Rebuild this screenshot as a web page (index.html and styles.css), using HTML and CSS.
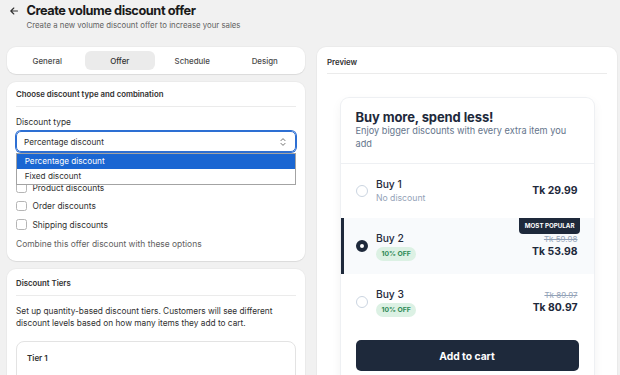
FILE: index.html
```html
<!DOCTYPE html>
<html lang="en">
<head>
<meta charset="utf-8">
<title>Create volume discount offer</title>
<link rel="stylesheet" href="styles.css">
</head>
<body>
<div class="page">
  <header class="head">
    <svg class="back" viewBox="0 0 8 8" width="8" height="8"><path d="M7.5 4H0.8M3.8 1L0.8 4l3 3" fill="none" stroke="#303030" stroke-width="1.1" stroke-linecap="round" stroke-linejoin="round"/></svg>
    <h1 class="title">Create volume discount offer</h1>
    <p class="subtitle">Create a new volume discount offer to increase your sales</p>
  </header>

  <div class="cols">
    <div class="left">
      <nav class="card tabs">
        <div class="tab">General</div>
        <div class="tab active">Offer</div>
        <div class="tab">Schedule</div>
        <div class="tab">Design</div>
      </nav>

      <section class="card sec sec-type">
        <h2 class="sec-title">Choose discount type and combination</h2>
        <div class="divider"></div>
        <div class="label">Discount type</div>
        <div class="select-wrap">
          <div class="select">
            <span>Percentage discount</span>
            <svg class="chev" viewBox="0 0 6 10" width="6" height="10"><path d="M1 3.6L3 1.6l2 2M1 6.4l2 2 2-2" fill="none" stroke="#616161" stroke-width="0.9" stroke-linecap="round" stroke-linejoin="round"/></svg>
          </div>
          <div class="dropdown">
            <div class="opt sel">Percentage discount</div>
            <div class="opt">Fixed discount</div>
          </div>
        </div>
        <div class="checks">
          <label class="check"><span class="box"></span>Product discounts</label>
          <label class="check"><span class="box"></span>Order discounts</label>
          <label class="check"><span class="box"></span>Shipping discounts</label>
        </div>
        <p class="hint">Combine this offer discount with these options</p>
      </section>

      <section class="card sec sec-tiers">
        <h2 class="sec-title">Discount Tiers</h2>
        <div class="divider"></div>
        <p class="body-text">Set up quantity-based discount tiers. Customers will see different discount levels based on how many items they add to cart.</p>
        <div class="tier">
          <h3 class="tier-title">Tier 1</h3>
        </div>
      </section>
    </div>

    <div class="right">
      <section class="card preview">
        <h2 class="sec-title">Preview</h2>
        <div class="divider divider-prev"></div>
        <div class="widget">
          <div class="w-head">
            <div class="w-title">Buy more, spend less!</div>
            <div class="w-sub">Enjoy bigger discounts with every extra item you add</div>
          </div>
          <div class="row row-first">
            <span class="radio"></span>
            <div class="info">
              <div class="name">Buy 1</div>
              <div class="note">No discount</div>
            </div>
            <div class="price"><div class="now">Tk 29.99</div></div>
          </div>
          <div class="row pop">
            <span class="pop-tag">MOST POPULAR</span>
            <span class="radio on"></span>
            <div class="info">
              <div class="name">Buy 2</div>
              <span class="off">10% OFF</span>
            </div>
            <div class="price"><div class="was">Tk 59.98</div><div class="now">Tk 53.98</div></div>
          </div>
          <div class="row">
            <span class="radio"></span>
            <div class="info">
              <div class="name">Buy 3</div>
              <span class="off">10% OFF</span>
            </div>
            <div class="price"><div class="was">Tk 89.97</div><div class="now">Tk 80.97</div></div>
          </div>
          <div class="w-foot">
            <div class="cart">Add to cart</div>
          </div>
        </div>
      </section>
    </div>
  </div>
</div>
</body>
</html>
```

FILE: styles.css
```css
* { box-sizing: border-box; margin: 0; padding: 0; }
html, body { overflow: hidden; height: 100%; }
body {
  background: #f1f1f1;
  font-family: Inter, "Noto Sans", sans-serif;
  color: #303030;
}
.page { padding: 2px 4px 0 7px; }

.head {
  display: grid;
  grid-template-columns: 8px auto;
  column-gap: 9px;
  align-items: center;
  padding-left: 2.5px;
}
.back { display: block; }
.title {
  font-size: 12.8px;
  font-weight: 700;
  line-height: 18px;
  color: #1a1a1a;
  letter-spacing: -0.45px;
}
.subtitle {
  grid-column: 2;
  font-size: 7.8px;
  line-height: 11px;
  color: #616161;
}

.cols {
  display: grid;
  grid-template-columns: 298px 300px;
  column-gap: 12px;
  margin-top: 16px;
  align-items: start;
}
.left { display: flex; flex-direction: column; gap: 8px; }

.card {
  background: #fff;
  border-radius: 9px;
  box-shadow: 0 1px 1px rgba(0,0,0,0.07), 0 0 0 1px rgba(0,0,0,0.025);
}

.tabs {
  height: 27px;
  padding: 4px 5px;
  display: grid;
  grid-template-columns: repeat(4, 1fr);
  gap: 2px;
}
.tab {
  display: flex;
  align-items: center;
  justify-content: center;
  font-size: 7.9px;
  font-weight: 500;
  color: #4a4a4a;
  border-radius: 6px;
}
.tab.active { background: #ebebeb; color: #303030; }

.sec { padding: 7px 9px 11px; }
.sec-tiers { padding-top: 9px; height: 140px; }
.sec-title {
  font-size: 7.8px;
  font-weight: 600;
  line-height: 11px;
  color: #303030;
}
.divider { height: 1px; background: #ebebeb; margin-top: 6px; }

.label { font-size: 8.4px; line-height: 12px; margin-top: 9px; }
.select-wrap { position: relative; margin-top: 3px; }
.select {
  height: 21px;
  border: 1px solid #2d6fd3;
  box-shadow: 0 0 0 1px #2d6fd3;
  border-radius: 5px;
  display: flex;
  align-items: center;
  justify-content: space-between;
  padding: 0 9px 0 7px;
  font-size: 8.2px;
  color: #303030;
}
.chev { display: block; }
.dropdown {
  position: absolute;
  left: 0;
  right: 0;
  top: calc(100% + 1px);
  border: 1px solid #a3a3a3;
  background: #fff;
  z-index: 2;
}
.opt {
  height: 15px;
  line-height: 15px;
  font-size: 8.2px;
  padding-left: 7.7px;
  color: #303030;
}
.opt.sel { background: #1a66d2; color: #fff; }

.checks { margin-top: 30px; display: flex; flex-direction: column; gap: 7.5px; }
.check {
  display: flex;
  align-items: center;
  gap: 6px;
  height: 11px;
  font-size: 8.4px;
  color: #303030;
}
.box {
  width: 10.5px;
  height: 10.5px;
  border: 1px solid #b5b5b5;
  border-radius: 2.5px;
  background: #fff;
}
.hint { margin-top: 8px; font-size: 8.45px; line-height: 12px; color: #616161; }

.body-text { margin-top: 10px; font-size: 8.3px; line-height: 11.7px; color: #303030; }
.tier {
  margin-top: 12px;
  border: 1px solid #e3e3e3;
  border-radius: 8px;
  padding: 11px 10px;
  height: 60px;
}
.tier-title { font-size: 8px; font-weight: 600; line-height: 11px; }

.preview { padding: 10px 10px 0; height: 400px; }
.divider-prev { margin-top: 5px; }
.widget {
  width: 253px;
  margin: 24px auto 0;
  border-radius: 8px;
  background: #fff;
  box-shadow: 0 0 0 1px #eef0f3, 0 4px 12px rgba(15,23,42,0.06);
  overflow: hidden;
}
.w-head { padding: 11px 15px 13px; border-bottom: 1px solid #eef0f3; }
.w-title {
  font-size: 13px;
  font-weight: 700;
  line-height: 16px;
  color: #1e293b;
  letter-spacing: -0.1px;
}
.w-sub { font-size: 9.2px; line-height: 12.5px; color: #64748b; }

.row {
  position: relative;
  display: flex;
  align-items: center;
  gap: 7.7px;
  height: 56px;
  padding: 0 16px 0 15px;
}
.row-first { height: 54px; }
.row.pop { background: #f8fafc; box-shadow: inset 3px 0 0 #1e293b; }
.radio {
  width: 12.7px;
  height: 12.7px;
  border: 1px solid #cbd5e1;
  border-radius: 50%;
  flex: none;
  background: #fff;
}
.radio.on { border: 4px solid #1e293b; }
.info { flex: 1; }
.name { font-size: 10.3px; font-weight: 500; line-height: 13px; color: #1e293b; }
.note { font-size: 8.7px; line-height: 12px; color: #94a3b8; margin-top: 1px; }
.off {
  display: block;
  width: fit-content;
  margin-top: 2px;
  height: 14px;
  line-height: 14px;
  padding: 0 5.6px;
  border-radius: 7px;
  background: #dcf1e4;
  color: #2f8a57;
  font-size: 6.8px;
  font-weight: 700;
}
.price { text-align: right; }
.was { font-size: 8px; line-height: 11px; color: #94a3b8; text-decoration: line-through; }
.now { font-size: 10.4px; font-weight: 700; line-height: 14px; color: #1e293b; }
.pop-tag {
  position: absolute;
  top: 0;
  right: 13.5px;
  height: 15.5px;
  line-height: 15.5px;
  padding: 0 5.5px;
  background: #1e293b;
  color: #fff;
  font-size: 6.2px;
  font-weight: 700;
  letter-spacing: 0;
  border-radius: 0 0 4px 4px;
}
.w-foot { padding: 10px 15px 16px; }
.cart {
  height: 31px;
  border-radius: 5px;
  background: #1e293b;
  color: #fff;
  font-size: 10.3px;
  font-weight: 700;
  display: flex;
  align-items: center;
  justify-content: center;
}
```
